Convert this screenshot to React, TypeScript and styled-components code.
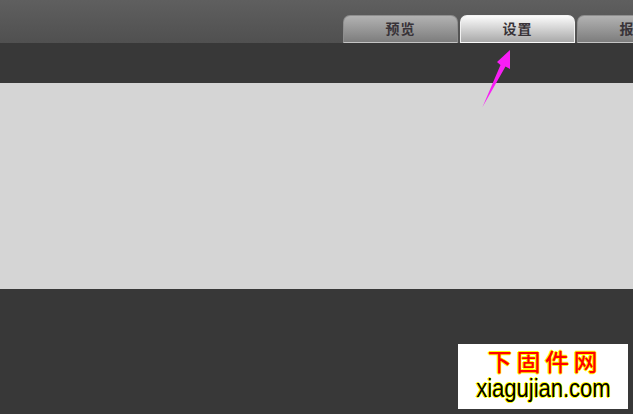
import * as React from 'react'
import styled, { createGlobalStyle } from 'styled-components'

const GlobalStyle = createGlobalStyle`
  html, body {
    margin: 0;
    padding: 0;
    background: #383838;
  }
`

const Page = styled.div`
  position: relative;
  width: 633px;
  height: 414px;
  overflow: hidden;
  display: flex;
  flex-direction: column;
  background: #383838;
`

const Header = styled.div`
  height: 43px;
  flex: none;
  display: flex;
  align-items: flex-end;
  gap: 2px;
  padding-left: 343px;
  box-sizing: border-box;
  background: linear-gradient(#5f5f5f, #505050);
`

const Tab = styled.div<{ $active?: boolean }>`
  flex: none;
  width: 115px;
  height: 28px;
  box-sizing: border-box;
  display: flex;
  align-items: center;
  justify-content: center;
  padding-bottom: 2px;
  border: 1px solid ${({ $active }) => ($active ? '#f2f2f2' : '#8e8e8e')};
  border-bottom: 1px solid ${({ $active }) => ($active ? '#fafafa' : '#c4c4c4')};
  border-radius: 7px 7px 0 0;
  background: ${({ $active }) =>
    $active
      ? 'linear-gradient(#fbfbfb, #a9a9a9)'
      : 'linear-gradient(#b2b2b2, #7d7d7d)'};
  font-family: "Noto Sans CJK SC", "Liberation Sans", sans-serif;
  font-size: 14px;
  font-weight: 700;
  letter-spacing: 1px;
  color: #383338;
  white-space: nowrap;
`

const Band = styled.div`
  height: 40px;
  flex: none;
`

const Panel = styled.div`
  height: 206px;
  flex: none;
  background: #d5d5d5;
`

const Arrow = styled.svg`
  position: absolute;
  left: 480px;
  top: 48px;
`

const Watermark = styled.div`
  position: absolute;
  left: 458px;
  top: 344px;
  width: 170px;
  height: 65px;
  display: flex;
  flex-direction: column;
  align-items: center;
  background: #fff;
`

const WatermarkTitle = styled.div`
  font-family: "Noto Sans CJK SC", sans-serif;
  font-size: 24px;
  font-weight: 500;
  line-height: 29px;
  margin-top: 2px;
  letter-spacing: 4.6px;
  margin-right: -4px;
  color: #f00;
  text-shadow: 1px 0 0 #ff0, -1px 0 0 #ff0, 0 1px 0 #ff0, 0 -1px 0 #ff0;
`

const WatermarkUrl = styled.div`
  font-family: "Liberation Sans", Arial, sans-serif;
  font-size: 25px;
  line-height: 27px;
  transform: scaleX(0.88);
  color: #000;
  text-shadow: 1px 0 0 #ff0, -1px 0 0 #ff0, 0 1px 0 #ff0, 0 -1px 0 #ff0;
`

const App = () => {
  return (
    <Page>
      <GlobalStyle />
      <Header>
        <Tab>预览</Tab>
        <Tab $active>设置</Tab>
        <Tab>报告</Tab>
      </Header>
      <Band />
      <Panel />
      <Arrow width="34" height="60" viewBox="480 48 34 60">
        <path d="M510 50 L497 62 L500.5 65 L482.5 107 L505.5 66.5 L510 69 Z" fill="#f81ef5" />
      </Arrow>
      <Watermark>
        <WatermarkTitle>下固件网</WatermarkTitle>
        <WatermarkUrl>xiagujian.com</WatermarkUrl>
      </Watermark>
    </Page>
  )
}

export default App
